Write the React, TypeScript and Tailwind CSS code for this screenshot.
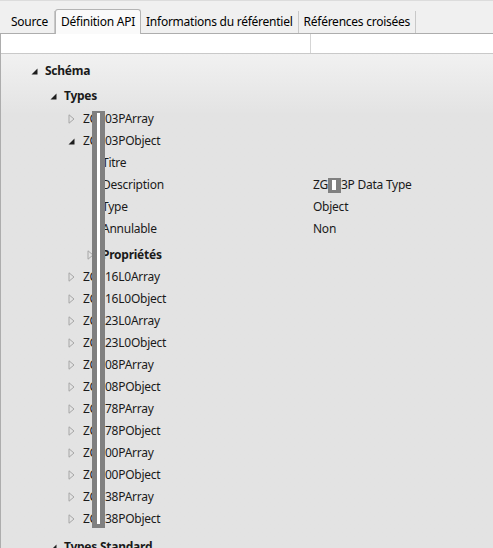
import React from "react";

type Row = {
  label: React.ReactNode;
  level: number;
  bold?: boolean;
  arrow?: "open" | "closed" | "none";
  value?: React.ReactNode;
  h: string;
  pt?: string;
};

function OpenArrow() {
  return (
    <svg width="7" height="7" viewBox="0 0 7 7" className="shrink-0">
      <path d="M6.5 0.5 L6.5 6.5 L0.5 6.5 Z" fill="#1e1e1e" />
    </svg>
  );
}

function ClosedArrow() {
  return (
    <svg width="7" height="10" viewBox="0 0 7 10" className="shrink-0">
      <path d="M1 0.8 L6 5 L1 9.2 Z" fill="none" stroke="#a6a6a6" strokeWidth="1" />
    </svg>
  );
}

const redactedValue = (
  <span className="inline-flex items-center">
    ZG
    <span className="inline-flex h-[15px] w-[13px] items-center justify-center bg-[#808080]">
      <span className="h-[10px] w-[4px] bg-white" />
    </span>
    3P Data Type
  </span>
);

// hidden part of the code lies under the redaction bar
function Code({ rest }: { rest: string }) {
  return (
    <span className="flex">
      <span className="w-[22px] overflow-hidden">ZC</span>
      <span>{rest}</span>
    </span>
  );
}

const items = ["16L0", "23L0", "08P", "78P", "00P", "38P"];

const rows: Row[] = [
  { label: "Schéma", level: 0, bold: true, arrow: "open", h: "h-[26px]" },
  { label: "Types", level: 1, bold: true, arrow: "open", h: "h-[24px]" },
  { label: <Code rest="03PArray" />, level: 2, arrow: "closed", h: "h-[22px]" },
  { label: <Code rest="03PObject" />, level: 2, arrow: "open", h: "h-[22px]" },
  { label: "Titre", level: 3, arrow: "none", h: "h-[22px]" },
  { label: "Description", level: 3, arrow: "none", value: redactedValue, h: "h-[22px]" },
  { label: "Type", level: 3, arrow: "none", value: "Object", h: "h-[22px]" },
  { label: "Annulable", level: 3, arrow: "none", value: "Non", h: "h-[22px]" },
  { label: "Propriétés", level: 3, bold: true, arrow: "closed", h: "h-[26px]", pt: "pt-[4px]" },
  ...items.flatMap((c) => [
    { label: <Code rest={`${c}Array`} />, level: 2, arrow: "closed" as const, h: "h-[22px]" },
    { label: <Code rest={`${c}Object`} />, level: 2, arrow: "closed" as const, h: "h-[22px]" },
  ]),
  { label: "Types Standard", level: 1, bold: true, arrow: "open", h: "h-[30px]", pt: "pt-[4px]" },
];

const indent = ["pl-[30px]", "pl-[49px]", "pl-[67px]", "pl-[86px]"];
const arrowBox = ["w-[14px]", "w-[14px]", "w-[15px]", "w-[15px]"];

export default function App() {
  return (
    <div
      className="flex h-[548px] w-[493px] flex-col overflow-hidden bg-[#f0f0f0] text-[12px] tracking-[-0.25px] text-[#1a1a1a]"
      style={{ fontFamily: '"Noto Sans", "Open Sans", sans-serif' }}
    >
      {/* tabs */}
      <div className="flex h-[33px] shrink-0 items-end border-t border-[#dcdcdc] pl-[5px]">
        <div className="flex h-[22px] items-center border-r border-[#c8c8c8] px-[6px] text-black">
          Source
        </div>
        <div className="relative -mb-px flex h-[25px] items-center rounded-t-[3px] border border-b-0 border-[#b4b4b4] bg-[#fafafa] px-[5px] text-black">
          Définition API
        </div>
        <div className="flex h-[22px] items-center border-r border-[#c8c8c8] px-[5px] text-black">
          Informations du référentiel
        </div>
        <div className="flex h-[22px] items-center border-r border-[#c8c8c8] px-[5px] text-black">
          Références croisées
        </div>
      </div>

      <div className="flex min-h-0 flex-1 flex-col border-l border-t border-[#adadad]">
        {/* column header */}
        <div className="grid h-[20px] shrink-0 grid-cols-[310px_1fr] border-b border-[#c9c9c9] bg-white">
          <div className="border-r border-[#d5d5d5]" />
          <div />
        </div>

        {/* tree */}
        <div className="relative flex-1 bg-gradient-to-b from-[#f1f1f1] via-[#e3e3e3] via-[12%] to-[#e3e3e3] pt-[4px]">
          {rows.map((r, i) => (
            <div key={i} className={`flex ${r.h} ${r.pt ?? ""} items-center`}>
              <div className={`flex w-[310px] items-center ${indent[r.level]}`}>
                <span className={`flex ${arrowBox[r.level]} items-center`}>
                  {r.arrow === "open" && <OpenArrow />}
                  {r.arrow === "closed" && <ClosedArrow />}
                </span>
                <span className={r.bold ? "font-bold" : ""}>{r.label}</span>
              </div>
              <div className="pl-[2px]">{r.value}</div>
            </div>
          ))}

          {/* redaction bar */}
          <div className="absolute left-[91px] top-[57px] flex h-[417px] w-[13px] justify-center bg-[#808080] pt-[2px]">
            <div className="h-[411px] w-[3px] bg-white" />
          </div>
        </div>
      </div>
    </div>
  );
}
